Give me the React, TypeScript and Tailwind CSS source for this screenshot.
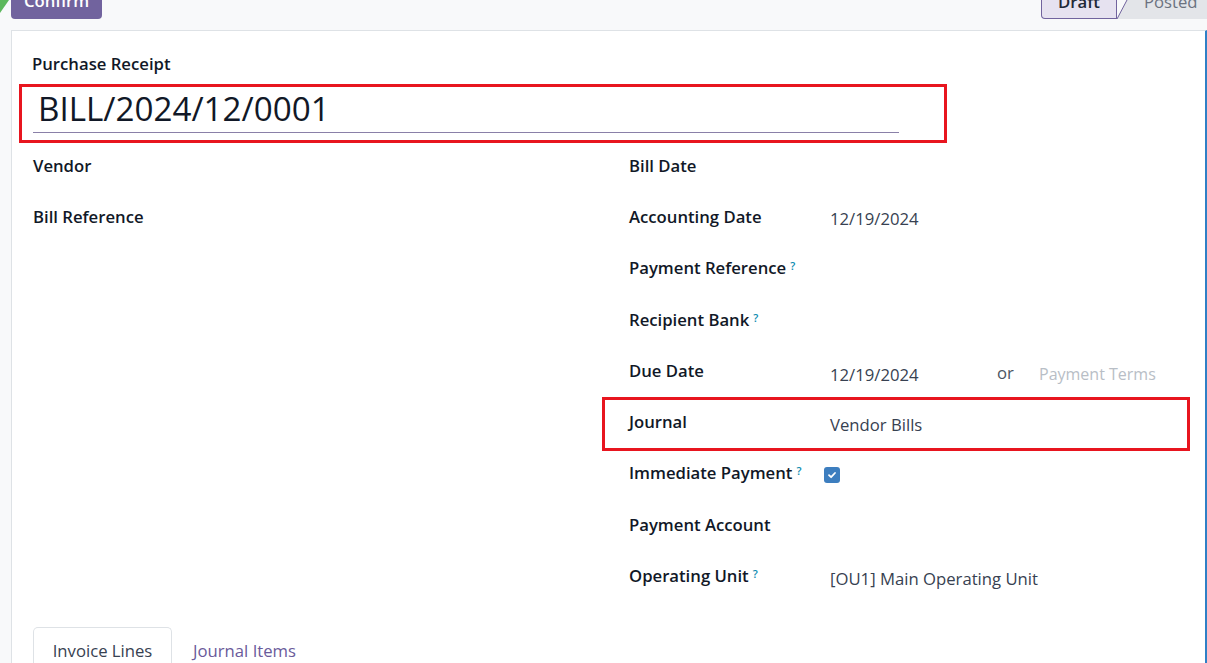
const labelCls = 'text-[16.7px] font-semibold text-[#111827]'
const valueCls = 'text-[16.7px] text-[#374151]'

function Help() {
  return <sup className="ml-[4px] text-[11px] font-semibold text-[#0b8bb0] relative -top-[4px]">?</sup>
}

type Field = { label: string; help?: boolean; value?: React.ReactNode; boxed?: boolean }

const leftFields: Field[] = [{ label: 'Vendor' }, { label: 'Bill Reference' }]

const rightFields: Field[] = [
  { label: 'Bill Date' },
  { label: 'Accounting Date', value: '12/19/2024' },
  { label: 'Payment Reference', help: true },
  { label: 'Recipient Bank', help: true },
  {
    label: 'Due Date',
    value: (
      <div className="flex items-center">
        <span className="w-[167px] pt-[3px]">12/19/2024</span>
        <span className="w-[42px] text-[#4b5563]">or</span>
        <span className="pt-[3px] text-[16px] text-[#b8bec6]">Payment Terms</span>
      </div>
    ),
  },
  { label: 'Journal', value: 'Vendor Bills', boxed: true },
  {
    label: 'Immediate Payment',
    help: true,
    value: (
      <span className="-ml-[6px] flex h-[16px] w-[16px] items-center justify-center rounded-[3px] bg-[#3d7ebf]">
        <svg width="10" height="10" viewBox="0 0 10 10" fill="none">
          <path d="M2 5.2 4.1 7.2 8 3" stroke="white" strokeWidth="1.8" strokeLinecap="round" strokeLinejoin="round" />
        </svg>
      </span>
    ),
  },
  { label: 'Payment Account' },
  { label: 'Operating Unit', help: true, value: '[OU1] Main Operating Unit' },
]

function Row({ f, labelW }: { f: Field; labelW: string }) {
  return (
    <div className="relative flex h-[51.3px] items-center">
      {f.boxed && (
        <div className="pointer-events-none absolute -left-[27px] top-0 h-[54px] w-[588px] border-[3px] border-[#e8151f]" />
      )}
      <div className={labelW + ' ' + labelCls + ' -mt-[3px]'}>
        {f.label}
        {f.help && <Help />}
      </div>
      {f.value !== undefined && <div className={valueCls + ' pt-[2px]'}>{f.value}</div>}
    </div>
  )
}

export default function App() {
  return (
    <div
      className="flex h-[663px] w-full flex-col overflow-hidden bg-[#f8f9fa]"
      style={{ fontFamily: '"Open Sans", "Noto Sans", sans-serif' }}
    >
      {/* control panel */}
      <div className="relative flex h-[30px] shrink-0 items-start justify-between">
        <div className="absolute left-0 top-0 h-0 w-0 border-r-[9px] border-t-[13px] border-r-transparent border-t-[#5cb85c]" />
        <button
          type="button"
          className="ml-[11px] h-[19px] w-[91px] overflow-hidden rounded-b-[4px] bg-[#71639e] text-[16.7px] font-semibold text-white"
        >
          <span className="-mt-[17px] block leading-[24px]">Confirm</span>
        </button>
        <div className="flex h-[19px]">
          <div className="w-[76px] overflow-hidden rounded-bl-[4px] border border-t-0 border-[#71639e] bg-[#e6e2f0] text-center text-[16.7px] font-semibold text-[#1f2937]">
            <span className="-mt-[10px] block leading-[24px]">Draft</span>
          </div>
          <div className="relative w-[90px] overflow-hidden bg-[#e3e5e9] text-[16.7px] text-[#6b7280]">
            <svg className="absolute left-0 top-0" width="20" height="19" viewBox="0 0 20 19">
              <path d="M0 0 H10 L0 19Z" fill="#f8f9fa" />
              <path d="M0 19 10 0" stroke="#71639e" strokeWidth="1" />
            </svg>
            <span className="-mt-[10px] block pl-[27px] leading-[24px]">Posted</span>
          </div>
        </div>
      </div>

      {/* sheet */}
      <div className="ml-[11px] flex-1 border-l border-t border-r-2 border-l-[#dee2e6] border-t-[#dee2e6] border-r-[#2f80c6] bg-white pl-[20px]">
        <div className="pt-[21px]">
          <div className={labelCls + ' leading-[24px]'}>Purchase Receipt</div>
          <div className="relative mt-[9px] ml-[1px] h-[48px] w-[866px] border-b border-[#8a80a8]">
            <div className="pointer-events-none absolute -left-[14px] -top-[1px] h-[59px] w-[928px] border-[3px] border-[#e8151f]" />
            <div className="pl-[5px] pt-[2px] text-[33.2px] leading-[44px] text-[#111827]">BILL/2024/12/0001</div>
          </div>
        </div>

        <div className="mt-[8px] flex">
          <div className="w-[597px] pl-[1px]">
            {leftFields.map((f) => (
              <Row key={f.label} f={f} labelW="w-[200px]" />
            ))}
          </div>
          <div className="flex-1">
            {rightFields.map((f) => (
              <Row key={f.label} f={f} labelW="w-[201px] shrink-0" />
            ))}
          </div>
        </div>

        {/* notebook tabs */}
        <div className="mt-[24px] flex items-start pl-[1px]">
          <div className="h-[60px] w-[139px] rounded-t-[5px] border border-b-0 border-[#dee2e6] pt-[10px] text-center text-[16.7px] text-[#374151]">
            Invoice Lines
          </div>
          <div className="pl-[21px] pt-[11px] text-[16.7px] text-[#6a5a9a]">Journal Items</div>
        </div>
      </div>
    </div>
  )
}
